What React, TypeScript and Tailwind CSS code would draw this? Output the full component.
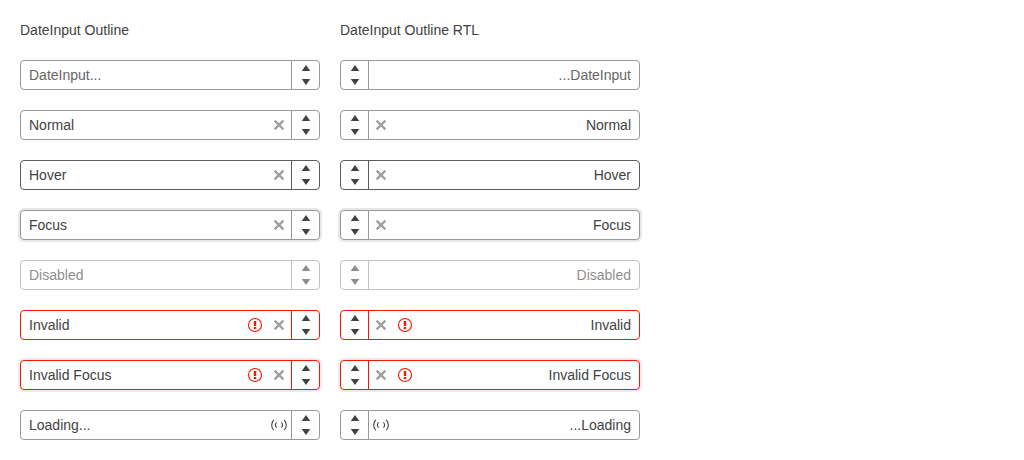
import { useState } from "react";
import clsx from "clsx";

type Status = "placeholder" | "normal" | "hover" | "focus" | "disabled" | "invalid" | "invalid-focus" | "loading";

const fields: { status: Status; text: string }[] = [
  { status: "placeholder", text: "DateInput..." },
  { status: "normal", text: "Normal" },
  { status: "hover", text: "Hover" },
  { status: "focus", text: "Focus" },
  { status: "disabled", text: "Disabled" },
  { status: "invalid", text: "Invalid" },
  { status: "invalid-focus", text: "Invalid Focus" },
  { status: "loading", text: "Loading..." },
];

const frame: Record<Status, string> = {
  placeholder: "border-[#999999]",
  normal: "border-[#999999]",
  hover: "border-[#5c5c5c]",
  focus: "border-[#999999] shadow-[0_0_0_2px_rgba(0,0,0,0.09)]",
  disabled: "border-[#999999] opacity-60",
  invalid: "border-[#f31700]",
  "invalid-focus": "border-[#f31700] shadow-[0_0_0_2px_rgba(0,0,0,0.08)]",
  loading: "border-[#999999]",
};

function ClearIcon() {
  return (
    <svg viewBox="0 0 16 16" className="size-4" fill="none" stroke="currentColor" strokeWidth="2.3" aria-hidden="true">
      <path d="M3.6 3.6l8.8 8.8M12.4 3.6l-8.8 8.8" />
    </svg>
  );
}

function InvalidIcon() {
  return (
    <svg viewBox="0 0 16 16" className="size-4" role="img" aria-label="Invalid value">
      <circle cx="8" cy="8" r="6.5" fill="none" stroke="currentColor" strokeWidth="1.1" />
      <path d="M6.8 4h2.4v5H6.8zM6.8 10h2.4v2H6.8z" fill="currentColor" />
    </svg>
  );
}

function LoadingIcon() {
  return (
    <svg viewBox="0 0 16 16" className="size-4" fill="none" stroke="currentColor" strokeWidth="1.1" role="img" aria-label="Loading">
      <path d="M2.8 2.8a7.4 7.4 0 0 0 0 10.4M13.2 2.8a7.4 7.4 0 0 1 0 10.4" />
      <path d="M5.6 5.3a3.7 3.7 0 0 0 0 5.4M10.4 5.3a3.7 3.7 0 0 1 0 5.4" />
    </svg>
  );
}

function DateInput({ status, text, dir }: { status: Status; text: string; dir: "ltr" | "rtl" }) {
  const isPlaceholder = status === "placeholder";
  const [value, setValue] = useState(isPlaceholder ? "" : text);
  const disabled = status === "disabled";
  const invalid = status === "invalid" || status === "invalid-focus";
  const clearable = !isPlaceholder && !disabled && status !== "loading";

  return (
    <div dir={dir} className={clsx("flex h-[30px] overflow-hidden rounded-sm border bg-white", frame[status])}>
      <input
        type="text"
        aria-label={text}
        aria-invalid={invalid}
        disabled={disabled}
        placeholder={isPlaceholder ? text : undefined}
        value={value}
        onChange={(event) => setValue(event.target.value)}
        className="min-w-0 flex-1 bg-transparent px-2 leading-5 outline-none placeholder:text-[#666666]"
      />
      {invalid && (
        <span className="flex w-6 items-center justify-center text-[#f31700]">
          <InvalidIcon />
        </span>
      )}
      {clearable && (
        <button
          type="button"
          aria-label="Clear"
          onClick={() => setValue("")}
          className="flex w-6 items-center justify-center text-[#a0a0a0]"
        >
          <ClearIcon />
        </button>
      )}
      {status === "loading" && (
        <span className="flex w-6 items-center justify-center">
          <LoadingIcon />
        </span>
      )}
      <span className="flex w-7 flex-col border-s border-inherit">
        <button type="button" aria-label="Increase value" disabled={disabled} className="flex flex-1 items-center justify-center">
          <svg viewBox="0 0 8 6" className="h-1.5 w-2 overflow-visible" fill="currentColor" aria-hidden="true">
            <path d="M4 0l4.3 6H-.3z" />
          </svg>
        </button>
        <button type="button" aria-label="Decrease value" disabled={disabled} className="flex flex-1 items-center justify-center">
          <svg viewBox="0 0 8 6" className="h-1.5 w-2 overflow-visible" fill="currentColor" aria-hidden="true">
            <path d="M4 6l4.3-6H-.3z" />
          </svg>
        </button>
      </span>
    </div>
  );
}

function Column({ title, dir }: { title: string; dir: "ltr" | "rtl" }) {
  return (
    <section className="flex min-w-0 max-w-[300px] flex-1 flex-col gap-5">
      <h2>{title}</h2>
      {fields.map((field) => (
        <DateInput key={field.status} dir={dir} {...field} />
      ))}
    </section>
  );
}

export default function App() {
  return (
    <main className="flex gap-5 bg-white p-5 font-['Liberation_Sans',Arial,sans-serif] text-sm text-[#424242]">
      <Column title="DateInput Outline" dir="ltr" />
      <Column title="DateInput Outline RTL" dir="rtl" />
    </main>
  );
}
